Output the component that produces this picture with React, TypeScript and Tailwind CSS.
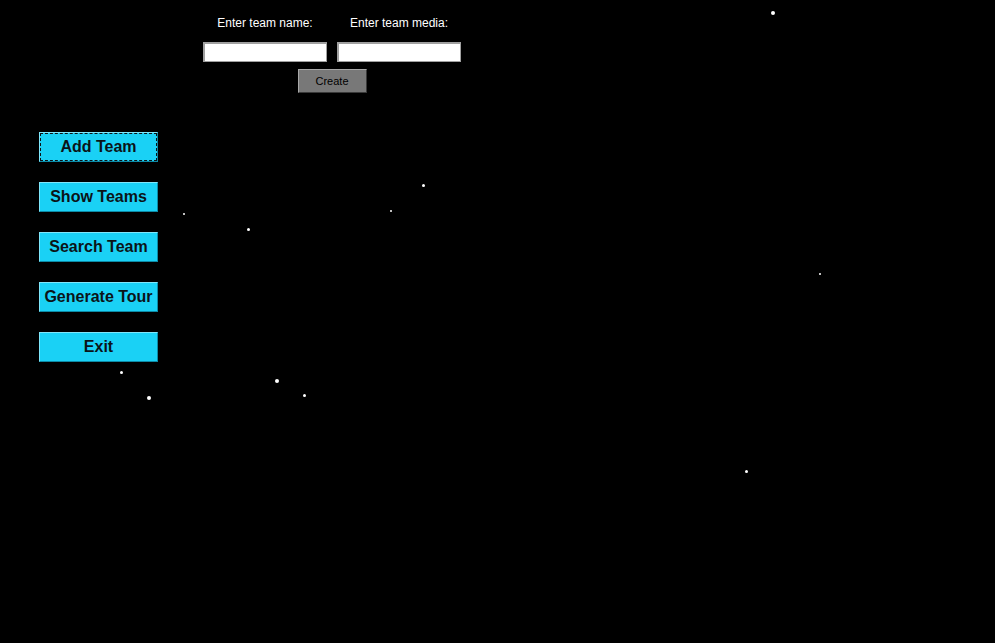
import React from 'react';

const stars = [
  { x: 773, y: 13, s: 4 },
  { x: 423, y: 185, s: 3 },
  { x: 184, y: 214, s: 2 },
  { x: 391, y: 211, s: 2 },
  { x: 248, y: 229, s: 3 },
  { x: 820, y: 274, s: 2 },
  { x: 121, y: 372, s: 3 },
  { x: 277, y: 381, s: 4 },
  { x: 149, y: 398, s: 4 },
  { x: 304, y: 395, s: 3 },
  { x: 746, y: 471, s: 3 },
];

const menu = ['Add Team', 'Show Teams', 'Search Team', 'Generate Tour', 'Exit'];

export default function App() {
  return (
    <div
      className="relative w-[995px] h-[643px] bg-black overflow-hidden"
      style={{ fontFamily: '"Liberation Sans", Arial, sans-serif' }}
    >
      {stars.map((st, i) => (
        <span
          key={i}
          className="absolute rounded-full bg-white"
          style={{ left: st.x - st.s / 2, top: st.y - st.s / 2, width: st.s, height: st.s }}
        />
      ))}

      {/* add team form */}
      <div className="relative flex flex-col pl-[203px] pt-[16px]">
        <div className="flex gap-[10px]">
          <div className="w-[124px] text-center text-[12px] leading-[15px] text-white">Enter team name:</div>
          <div className="w-[124px] text-center text-[12px] leading-[15px] text-white">Enter team media:</div>
        </div>
        <div className="flex gap-[10px] mt-[11px]">
          <input className="w-[124px] h-[20px] bg-white border-t-2 border-l-2 border-[#a0a0a0] border-b border-r outline-none" />
          <input className="w-[124px] h-[20px] bg-white border-t-2 border-l-2 border-[#a0a0a0] border-b border-r outline-none" />
        </div>
        <div className="w-[258px] flex justify-center mt-[7px]">
          <button className="w-[69px] h-[24px] bg-[#787878] border border-[#a8a8a8] border-r-[#3a3a3a] border-b-[#3a3a3a] text-[11px] text-black">
            Create
          </button>
        </div>
      </div>

      {/* main menu */}
      <div className="relative flex flex-col gap-[20px] ml-[39px] mt-[39px] w-[119px]">
        {menu.map((label, i) => (
          <button
            key={label}
            className={
              'relative h-[30px] w-[119px] bg-[#1ad1f5] border border-[#7fe6fa] border-r-[#0c8aa6] border-b-[#0c8aa6] text-[16px] font-bold text-[#0b1418] whitespace-nowrap flex items-center justify-center' +
              (i === 0 ? ' outline outline-1 outline-dashed outline-[#0b1418] -outline-offset-2' : '')
            }
          >
            {label}
          </button>
        ))}
      </div>
    </div>
  );
}
